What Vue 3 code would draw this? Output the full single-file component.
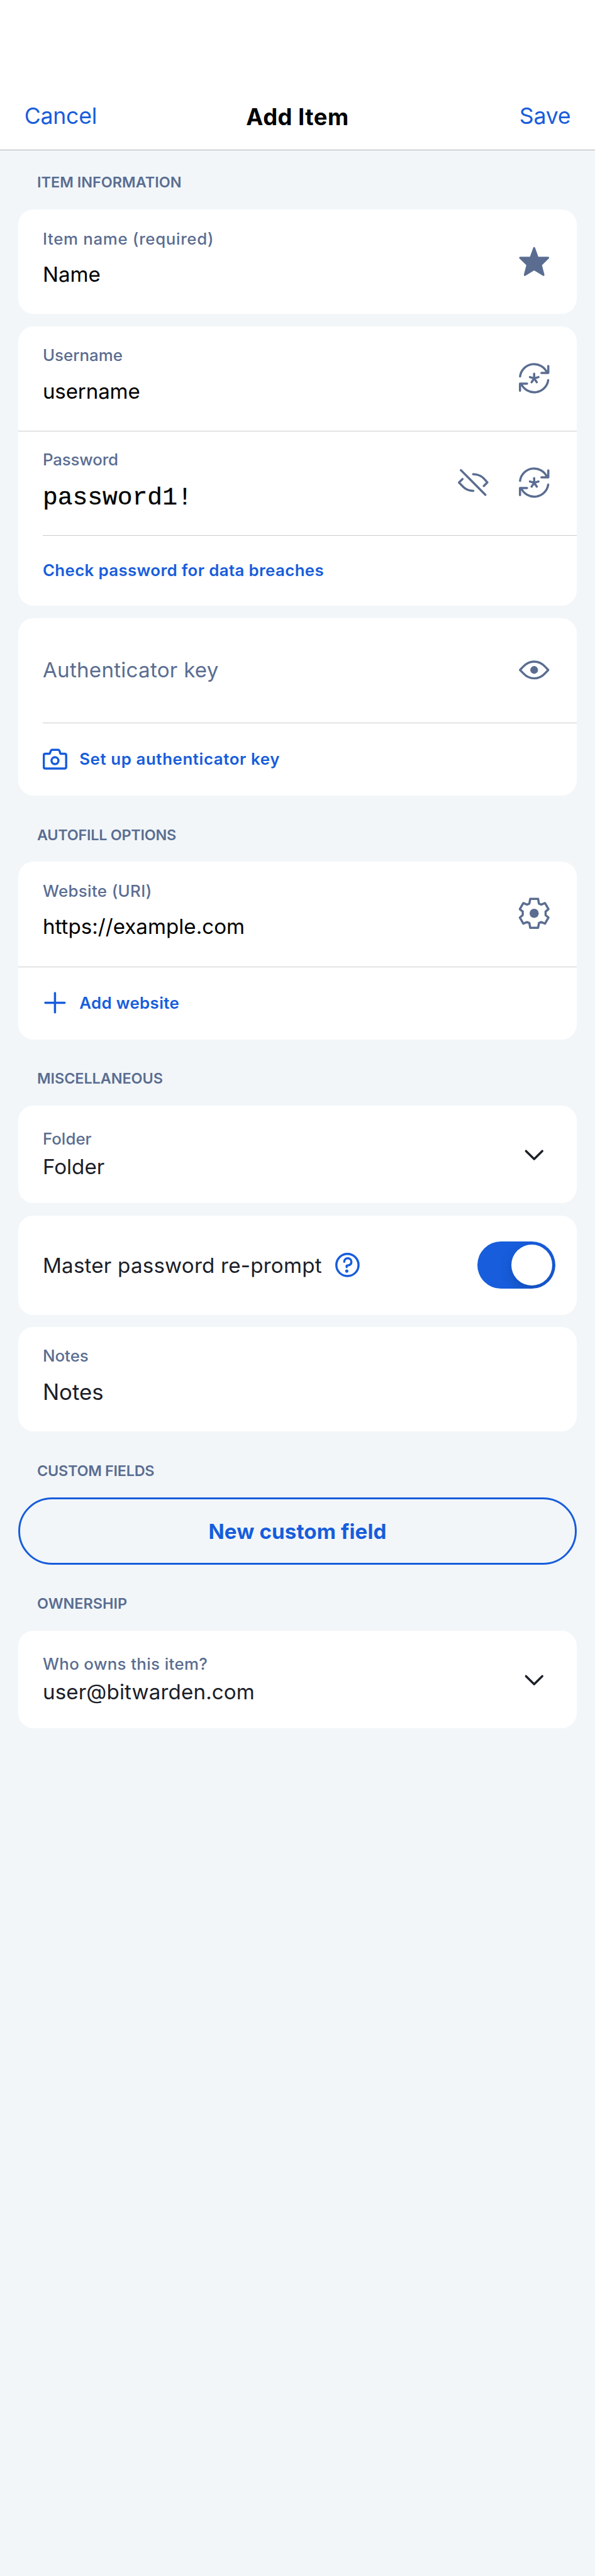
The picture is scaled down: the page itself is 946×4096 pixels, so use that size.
<script setup>
import { ref } from 'vue'

const itemName = ref('Name')
const username = ref('username')
const password = ref('password1!')
const uri = ref('https://example.com')
const reprompt = ref(true)
</script>

<template>
  <div class="screen">
    <header class="navbar">
      <a class="nav-action cancel">Cancel</a>
      <h1 class="nav-title">Add Item</h1>
      <a class="nav-action save">Save</a>
    </header>

    <main class="form">
      <section class="group">
        <h2 class="heading h-info">ITEM INFORMATION</h2>

        <div class="card">
          <div class="row field">
            <div class="texts">
              <span class="label l-name">Item name (required)</span>
              <span class="value v-name">{{ itemName }}</span>
            </div>
            <svg class="icon star" viewBox="0 0 60 60">
              <path d="M30 4.3 36.8 23.2H57.5L43.2 37.2 48.3 57 30 46 11.7 57 16.8 37.2 2.5 23.2H23.2Z" />
            </svg>
          </div>
        </div>

        <div class="card">
          <div class="row field">
            <div class="texts">
              <span class="label l-user">Username</span>
              <span class="value v-user">{{ username }}</span>
            </div>
            <svg class="icon" viewBox="0 0 60 60">
              <path d="M2.3 26.5A27.8 27.8 0 0 1 55.5 19.5M57.8 6.3V19.8H44.3M57.6 34A27.8 27.8 0 0 1 4.5 41M2.2 54.6V40.8H16M30 30.5V21.3M30 30.5 21.7 28M30 30.5 38.5 28M30 30.5 25 38M30 30.5 35.2 38" />
            </svg>
          </div>
          <div class="row field line-full">
            <div class="texts">
              <span class="label l-pass">Password</span>
              <span class="value mono">{{ password }}</span>
            </div>
            <svg class="icon" viewBox="0 0 60 60">
              <path d="M6 5.7 54 54M30 13.7C39 13.7 46 17 51 22L58 29.8 51 36.8M9 23.3 2.2 30 10 38C15 43.3 22 46.3 30.3 46.3" />
            </svg>
            <svg class="icon" viewBox="0 0 60 60">
              <path d="M2.3 26.5A27.8 27.8 0 0 1 55.5 19.5M57.8 6.3V19.8H44.3M57.6 34A27.8 27.8 0 0 1 4.5 41M2.2 54.6V40.8H16M30 30.5V21.3M30 30.5 21.7 28M30 30.5 38.5 28M30 30.5 25 38M30 30.5 35.2 38" />
            </svg>
          </div>
          <div class="row action line-inset">
            <span class="link k-check">Check password for data breaches</span>
          </div>
        </div>

        <div class="card">
          <div class="row field single">
            <span class="value placeholder">Authenticator key</span>
            <svg class="icon" viewBox="0 0 60 60">
              <path d="M2.2 30 9 23C21 10.3 39 10.3 51 23L57.8 30 51 37C39 49.7 21 49.7 9 37Z" />
              <circle class="dot" cx="30" cy="30" r="7.6" />
            </svg>
          </div>
          <div class="row action tall line-inset">
            <svg class="glyph" viewBox="0 0 48 48">
              <path d="M5 13H13.5L16 7Q16.7 5.3 18.5 5.3H30.5Q32.2 5.3 32.7 7L34.8 13H43Q46 13 46 16V39Q46 42 43 42H5Q2 42 2 39V16Q2 13 5 13Z" />
              <circle cx="24" cy="26.7" r="6.8" />
            </svg>
            <span class="link k-setup">Set up authenticator key</span>
          </div>
        </div>
      </section>

      <section class="group">
        <h2 class="heading h-auto">AUTOFILL OPTIONS</h2>
        <div class="card">
          <div class="row field">
            <div class="texts">
              <span class="label l-uri">Website (URI)</span>
              <span class="value v-uri">{{ uri }}</span>
            </div>
            <svg class="icon" viewBox="0 0 60 60">
              <path d="M22.3 1.5H37.7L39.5 11 44 12.8 51.3 9.8 58.2 21.7 52.5 26.5V33.5L58.2 38.3 51.3 50.2 44 47.2 39.5 49 37.7 58.5H22.3L20.5 49 16 47.2 8.7 50.2 1.8 38.3 7.5 33.5V26.5L1.8 21.7 8.7 9.8 16 12.8 20.5 11Z" />
              <circle class="dot" cx="30" cy="30" r="9" />
            </svg>
          </div>
          <div class="row action tall line-full">
            <svg class="glyph" viewBox="0 0 48 48">
              <path d="M24 5V43M5 24H43" />
            </svg>
            <span class="link k-add">Add website</span>
          </div>
        </div>
      </section>

      <section class="group">
        <h2 class="heading h-misc">MISCELLANEOUS</h2>
        <div class="card">
          <div class="row menu">
            <div class="texts">
              <span class="label l-folder">Folder</span>
              <span class="value ink v-folder">Folder</span>
            </div>
            <svg class="icon chevron" viewBox="0 0 60 60">
              <path d="M14 22.5 30 38.2 46 22.5" />
            </svg>
          </div>
        </div>

        <div class="card">
          <div class="row toggle">
            <span class="value ink v-reprompt">Master password re-prompt</span>
            <svg class="glyph help" viewBox="0 0 48 48">
              <circle cx="24" cy="24" r="21.8" />
              <path d="M17.7 17.5C17.7 8.4 31.8 8.4 31.8 18 31.8 23.4 28 25 22.5 25.2V28" />
              <circle class="dot" cx="22.7" cy="36" r="3.2" />
            </svg>
            <span class="switch" :class="{ on: reprompt }"><i class="knob"></i></span>
          </div>
        </div>

        <div class="card">
          <div class="row field">
            <div class="texts">
              <span class="label l-notes">Notes</span>
              <span class="value ink v-notes">Notes</span>
            </div>
          </div>
        </div>
      </section>

      <section class="group">
        <h2 class="heading h-custom">CUSTOM FIELDS</h2>
        <button class="outline" type="button">New custom field</button>
      </section>

      <section class="group">
        <h2 class="heading h-owner">OWNERSHIP</h2>
        <div class="card">
          <div class="row menu">
            <div class="texts">
              <span class="label l-owner">Who owns this item?</span>
              <span class="value ink v-owner">user@bitwarden.com</span>
            </div>
            <svg class="icon chevron" viewBox="0 0 60 60">
              <path d="M14 22.5 30 38.2 46 22.5" />
            </svg>
          </div>
        </div>
      </section>
    </main>
  </div>
</template>

<style>
/* 1rem is one hundred device pixels of the 1170-pixel-wide phone screen */
html {
  font-size: 80.88px;
}
body {
  margin: 0;
  background: #f2f6f9;
}
</style>

<style scoped>
.screen {
  box-sizing: border-box;
  min-height: 4096px;
  background: #f2f6f9;
  color: #000;
  font-family: Inter, "Open Sans", sans-serif;
}

.navbar {
  box-sizing: border-box;
  height: 2.95rem;
  padding: 1.985rem 0.48rem 0;
  display: grid;
  grid-template-columns: 1fr auto 1fr;
  align-items: start;
  background: #fff;
  border-bottom: 1px solid #aeb1b4;
}
.nav-action {
  font-size: 0.44rem;
  line-height: 0.6rem;
  letter-spacing: -0.003rem;
  color: #175ddc;
}
.save {
  justify-self: end;
}
.nav-title {
  margin: 0.02rem 0 0;
  font-size: 0.45rem;
  line-height: 0.6rem;
  font-weight: 700;
  letter-spacing: 0.006rem;
}

.form {
  display: flex;
  flex-direction: column;
  gap: 0.585rem;
  padding: 0.455rem 0.36rem 0;
}
.group {
  display: flex;
  flex-direction: column;
  gap: 0.24rem;
}
.heading {
  margin: 0 0 0.115rem 0.37rem;
  font-size: 0.29rem;
  line-height: 0.36rem;
  font-weight: 600;
  color: #5a6d91;
}
.h-auto,
.h-custom {
  letter-spacing: -0.0035rem;
}
.h-misc {
  letter-spacing: -0.001rem;
}

.card {
  background: #fff;
  border-radius: 0.3rem;
  overflow: hidden;
}
.row {
  position: relative;
  box-sizing: border-box;
  display: flex;
  align-items: center;
  padding: 0 0.54rem 0 0.48rem;
}
.field {
  height: 2.055rem;
  gap: 0.6rem;
  padding-bottom: 0.02rem;
}
.action {
  height: 1.385rem;
}
.action.tall {
  height: 1.44rem;
  gap: 0.24rem;
}
.menu {
  height: 1.92rem;
}
.toggle {
  height: 1.95rem;
  padding-right: 0.42rem;
}
.line-full::before,
.line-inset::before {
  content: "";
  position: absolute;
  top: 0;
  right: 0;
  left: 0;
  height: 1px;
  background: #cbcccd;
}
.line-inset::before {
  left: 0.48rem;
}

.texts {
  flex: 1;
  align-self: flex-start;
  display: flex;
  flex-direction: column;
  padding-top: 0.375rem;
}
.menu .texts {
  padding-top: 0.45rem;
}
.label {
  font-size: 0.32rem;
  line-height: 0.4rem;
  font-weight: 500;
  color: #5a6d91;
}
.l-name {
  letter-spacing: 0.008rem;
}
.l-pass {
  letter-spacing: -0.002rem;
}
.l-uri,
.l-owner {
  letter-spacing: 0.0043rem;
}
.value {
  margin-top: 0.235rem;
  font-size: 0.41rem;
  line-height: 0.52rem;
  white-space: nowrap;
}
.v-user {
  letter-spacing: -0.002rem;
}
.v-owner {
  letter-spacing: 0.0015rem;
}
.v-reprompt {
  letter-spacing: 0.0025rem;
}
.v-notes {
  font-size: 0.43rem;
}
.menu .value {
  margin-top: 0.087rem;
}
.single .value,
.toggle .value {
  margin-top: 0;
}
.single .value {
  flex: 1;
}
.mono {
  margin-top: 0.285rem;
  font-family: "Liberation Mono", monospace;
  font-size: 0.49rem;
  -webkit-text-stroke: 0.3px #000;
}
.ink {
  color: #1b2029;
}
.placeholder {
  letter-spacing: 0.003rem;
  color: #5a6d91;
}
.link {
  font-size: 0.32rem;
  line-height: 0.4rem;
  font-weight: 600;
  letter-spacing: 0.0043rem;
  color: #175ddc;
}
.k-setup {
  letter-spacing: 0.0072rem;
}

.icon {
  flex: none;
  width: 0.6rem;
  height: 0.6rem;
  overflow: visible;
  fill: none;
  stroke: #5a6d91;
  stroke-width: 4.3;
  stroke-linecap: round;
  stroke-linejoin: round;
}
.icon .dot {
  fill: #5a6d91;
  stroke: none;
}
.star {
  fill: #5a6d91;
  stroke-width: 4;
}
.chevron {
  stroke: #1b2029;
}
.glyph {
  flex: none;
  width: 0.48rem;
  height: 0.48rem;
  fill: none;
  stroke: #175ddc;
  stroke-width: 4.3;
  stroke-linecap: round;
  stroke-linejoin: round;
}
.glyph .dot {
  fill: #175ddc;
  stroke: none;
}
.help {
  margin-left: 0.26rem;
}

.switch {
  box-sizing: border-box;
  width: 1.53rem;
  height: 0.93rem;
  margin-left: auto;
  padding: 0.06rem;
  display: flex;
  border-radius: 0.465rem;
  background: #c8ccd2;
  overflow: hidden;
}
.switch.on {
  justify-content: flex-end;
  background: #175ddc;
}
.knob {
  width: 0.81rem;
  height: 0.81rem;
  border-radius: 50%;
  background: #fff;
  box-shadow: 0 0.09rem 0.24rem rgba(0, 0, 0, 0.17);
}

.outline {
  box-sizing: border-box;
  height: 1.32rem;
  padding: 0;
  border: 0.045rem solid #175ddc;
  border-radius: 0.66rem;
  background: transparent;
  color: #175ddc;
  font: 700 0.41rem/0.52rem Inter, "Open Sans", sans-serif;
  letter-spacing: 0.001rem;
}
</style>
